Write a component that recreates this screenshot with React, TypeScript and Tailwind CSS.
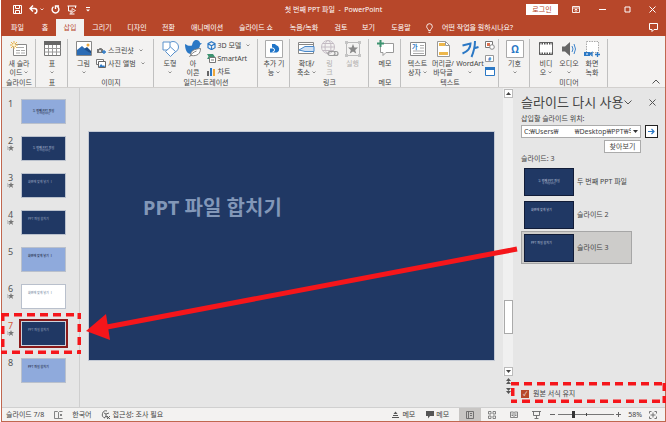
import React from 'react';

const TABS = [
    { label: '파일', width: 'w-[33px]' },
    { label: '홈', width: 'w-[22px]' },
    { label: '삽입', width: 'w-[28px]', active: true },
    { label: '그리기', width: 'w-[36px]' },
    { label: '디자인', width: 'w-[34px]' },
    { label: '전환', width: 'w-[29px]' },
    { label: '애니메이션', width: 'w-[48px]' },
    { label: '슬라이드 쇼', width: 'w-[50px]' },
    { label: '녹음/녹화', width: 'w-[46px]' },
    { label: '검토', width: 'w-[28px]' },
    { label: '보기', width: 'w-[27px]' },
    { label: '도움말', width: 'w-[38px]' },
];

const THUMBS = [
    { fill: 'bg-[#8faadc]', ink: 'text-[#1f2a44]', text: '두 번째 PPT 파일', title: true, star: false },
    { fill: 'bg-[#203864]', ink: 'text-[#9fabc4]', text: '두 번째 PPT 파일', title: true, star: true },
    { fill: 'bg-[#203864]', ink: 'text-[#8f9db9]', text: '화면에 맞게 넣기 Ⅰ', title: false, star: true },
    { fill: 'bg-[#203864]', ink: 'text-[#8f9db9]', text: 'PPT 파일 합치기', title: false, star: true },
    { fill: 'bg-[#8faadc]', ink: 'text-[#1f2a44]', text: '화면에 맞게 넣기 Ⅰ', title: false, star: false },
    { fill: 'bg-white', ink: 'text-[#8090a8]', text: '화면에 맞게 넣기 Ⅰ', title: false, star: true },
    { fill: 'bg-[#203864]', ink: 'text-[#8f9db9]', text: 'PPT 파일 합치기', title: false, star: true, active: true },
    { fill: 'bg-[#8faadc]', ink: 'text-[#1f2a44]', text: 'PPT 파일 합치기', title: false, star: false },
];

const REUSE = [
    { name: '두 번째 PPT 파일', text: '두 번째 PPT 파일', title: true },
    { name: '슬라이드 2', text: '화면에 맞게 넣기', title: false },
    { name: '슬라이드 3', text: 'PPT 파일 합치기', title: false, active: true },
];

interface IconProps {
    w?: number;
    h?: number;
    className?: string;
    children: React.ReactNode;
}

const Icon: React.FC<IconProps> = ({ w = 16, h = 16, className = '', children }) => (
    <svg width={w} height={h} viewBox={`0 0 ${w} ${h}`} fill="none" aria-hidden="true" className={`shrink-0 ${className}`}>
        {children}
    </svg>
);

const Chevron = ({ className = '' }: { className?: string }) => (
    <Icon w={4} h={3} className={`inline-block ${className}`}>
        <path d="M.5.5 2 2 3.5.5" stroke="#777" strokeWidth=".8" />
    </Icon>
);

interface BigButtonProps {
    icon: React.ReactNode;
    lines: string[];
    arrow?: boolean;
    disabled?: boolean;
    width?: string;
}

const BigButton: React.FC<BigButtonProps> = ({ icon, lines, arrow, disabled, width = 'w-[23px]' }) => (
    <button disabled={disabled} className={`flex flex-col items-center shrink-0 whitespace-nowrap leading-[9px] ${width} ${disabled ? 'text-[#b0aeac]' : ''}`}>
        <span className="flex h-[19px] items-center justify-center">{icon}</span>
        <span className="mt-px">{lines[0]}</span>
        <span className="flex h-[9px] items-center gap-[2px]">
            {lines[1]}
            {arrow && <Chevron />}
        </span>
    </button>
);

const SmallButton = ({ icon, label, arrow }: { icon: React.ReactNode; label?: string; arrow?: boolean }) => (
    <button aria-label={label ?? '텍스트 도구'} className="flex h-[13px] items-center gap-[2px] whitespace-nowrap">
        {icon}
        {label}
        {arrow && <Chevron className="ml-[3px]" />}
    </button>
);

const Group = ({ label, width, children }: { label?: string; width: string; children: React.ReactNode }) => (
    <section className={`relative flex flex-col shrink-0 ${width}`}>
        <div className="flex h-[40px] justify-center">{children}</div>
        <span className="text-center leading-[8px] whitespace-nowrap">{label}</span>
        <span className="absolute inset-y-0 right-0 w-px bg-[#c0c0c0]" />
    </section>
);

const Ribbon = () => (
    <div className="relative flex h-[52px] shrink-0 border-b border-[#d2d0ce] bg-[#f3f2f1] pt-[3px]">
        <Group label="슬라이드" width="w-[34px]">
            <BigButton width="w-[32px]" lines={['새 슬라', '이드']} arrow icon={
                <Icon w={18}>
                    <path d="M3.5 3.5h13v11h-13z" fill="#fff" stroke="#888" />
                    <path d="M6 6.5h8M6 9.5h4M11 9.5h4M6 12h4M11 12h4" stroke="#aaa" />
                    <path d="M4 0v8M0 4h8M1 1l6 6M7 1 1 7" stroke="#e8b34a" />
                    <circle cx="4" cy="4" r="1.5" fill="#fff3cf" />
                </Icon>
            } />
        </Group>
        <Group label="표" width="w-[32px]">
            <BigButton lines={['표', '']} arrow icon={
                <Icon w={17} h={15}>
                    <path d="M.5.5h16v14H.5z" fill="#fff" stroke="#777" />
                    <path d="M0 0h17v4H0z" fill="#666" />
                    <path d="M.5 7.5h16M.5 11h16M4.5 4v10M8.5 4v10M12.5 4v10" stroke="#999" />
                </Icon>
            } />
        </Group>
        <Group label="이미지" width="w-[86px]">
            <BigButton lines={['그림', '']} arrow icon={
                <Icon h={15}>
                    <path d="M.5.5h15v14H.5z" fill="#fff" stroke="#888" />
                    <path d="m1 9 5-4 9 8v1H1z" fill="#2b6cb5" />
                    <path d="m8 8 3-2 4 4v3z" fill="#1c4f8c" />
                    <circle cx="12" cy="4" r="1.5" fill="#eda73c" />
                </Icon>
            } />
            <div className="ml-px flex w-[54px] flex-col pt-[5px]">
                <SmallButton label="스크린샷" arrow icon={
                    <Icon w={10} h={9}>
                        <path d="M1 3h2l.5-1h2L6 3h1v4H1z" fill="#777" />
                        <circle cx="4" cy="5" r="1" fill="#fff" />
                        <path d="M8 4v4M6 6h4" stroke="#2b78c5" strokeWidth="1.3" />
                    </Icon>
                } />
                <SmallButton label="사진 앨범" arrow icon={
                    <Icon w={10} h={9}>
                        <path d="M.5.5h7v5h-7z" fill="#fff" stroke="#777" />
                        <path d="M2.5 2.5h7v6h-7z" fill="#fff" stroke="#666" />
                        <path d="m3 8 2-3 2 2 1-1 1 2z" fill="#2b78c5" />
                    </Icon>
                } />
            </div>
        </Group>
        <Group label="일러스트레이션" width="w-[104px]">
            <BigButton lines={['도형', '']} arrow icon={
                <Icon w={17}>
                    <circle cx="11" cy="6" r="5.5" fill="#fff" stroke="#5a92cc" />
                    <path d="M1 1h7v8H1z" fill="#fff" stroke="#5a92cc" />
                    <path d="m8.5 6 5 4.500-5 5-5-5z" fill="#fff" stroke="#5a92cc" />
                </Icon>
            } />
            <BigButton lines={['아', '이콘']} icon={
                <Icon w={17} h={17}>
                    <path d="M0 4c3 2 5 2 7 1.500C7.500 2.500 8.500 0 11.500 0 13.500 0 15 1.500 15 3l2 .5-2 1.500c0 2-1 3-2 4-1 4-4 5-7 5C2 14 0 10 0 4z" fill="#2b78c5" />
                    <path d="M6 15.500C5 11 9 9 15.500 8.500c0 5-3 8-9.500 7zM4.500 17c1.500-3 4-5 7-6" fill="#fff" stroke="#777" strokeWidth=".9" />
                </Icon>
            } />
            <div className="ml-[2px] flex w-[47px] flex-col">
                <SmallButton label="3D 모델" arrow icon={
                    <Icon w={9} h={9}>
                        <path d="m4.500.7 3.500 2v4l-3.500 2-3.500-2v-4zM1 2.700l3.500 2 3.500-2M4.500 4.700v4" stroke="#2b78c5" strokeWidth="1.200" />
                    </Icon>
                } />
                <SmallButton label="SmartArt" icon={
                    <Icon w={9} h={9}>
                        <path d="M0 0h6l2 3-2 2H0l1.500-2.500z" fill="#3d9370" />
                        <path d="M2.500 3.500h6v5h-6z" fill="#fff" stroke="#777" />
                        <path d="M4 6h3" stroke="#777" />
                    </Icon>
                } />
                <SmallButton label="차트" icon={
                    <Icon w={9} h={9}>
                        <path d="M0 4h2v5H0z" fill="#666" />
                        <path d="M3 1h2v8H3z" fill="#2b78c5" />
                        <path d="M6 2h2v7H6z" fill="#eda73c" />
                    </Icon>
                } />
            </div>
        </Group>
        <Group width="w-[32px]">
            <BigButton width="w-[28px]" lines={['추가 기', '능']} arrow icon={
                <Icon w={18} h={18}>
                    <path d="M.5.5h17v17H.5z" fill="#fff" stroke="#aaa" />
                    <path d="M7 4h3l1 1a4 4 0 0 1 1 7.500H5V8h2z" fill="#1f74c8" />
                    <path d="M5 8h2.500a2 2 0 0 1 0 4" stroke="#fff" />
                </Icon>
            } />
        </Group>
        <Group label="링크" width="w-[79px]">
            <BigButton lines={['확대/', '축소']} arrow icon={
                <Icon w={17} h={13}>
                    <path d="M.5.5h15v11H.5z" fill="#fff" stroke="#888" />
                    <path d="M.5 2.500h15" stroke="#888" />
                    <path d="M1 8 7 4.500h9v5H7z" fill="#cfe0f3" stroke="#4a88c8" />
                </Icon>
            } />
            <BigButton disabled lines={['링', '크']} icon={
                <Icon w={18} h={17}>
                    <circle cx="7" cy="7" r="6.500" stroke="#c4bcc4" />
                    <ellipse cx="7" cy="7" rx="3" ry="6.500" stroke="#c4bcc4" />
                    <path d="M.5 7h13M1.500 3.500h11M1.500 10.500h11" stroke="#c4bcc4" />
                    <path d="M9 11.500h3a2 2 0 0 1 0 4H9a2 2 0 0 1 0-4zM13 11.500h2a2 2 0 0 1 0 4h-2" stroke="#999" strokeWidth="1.200" />
                </Icon>
            } />
            <BigButton disabled lines={['실행', '']} icon={
                <Icon>
                    <path d="M1.500 1.500h13v13h-13z" stroke="#bbb" />
                    <path d="M0 0h3v3H0zM13 0h3v3h-3zM0 13h3v3H0zM13 13h3v3h-3z" fill="#c4c4c4" />
                    <path d="m8 3 1.400 3.400 3.600.2-2.800 2.300 1 3.600L8 10.500l-3.200 2 1-3.600L3 6.600l3.600-.2z" fill="#888" />
                </Icon>
            } />
        </Group>
        <Group label="메모" width="w-[32px]">
            <BigButton lines={['메모', '']} icon={
                <Icon w={17} h={17}>
                    <path d="M3.500 3.500h13v9H9l-3 3v-3H3.500z" fill="#fff" stroke="#999" />
                    <path d="M3.500 0v7M0 3.500h7" stroke="#3d9370" strokeWidth="2" />
                </Icon>
            } />
        </Group>
        <Group label="텍스트" width="w-[98px]">
            <BigButton width="w-[25px]" lines={['텍스트', '상자']} arrow icon={
                <Icon w={16} h={14}>
                    <path d="M.5.5h15v13H.5z" fill="#fff" stroke="#888" />
                    <path d="M10 3.500h4M10 6h4M3 9h11M3 11.500h11" stroke="#aaa" />
                    <text x="2" y="7" fontSize="6" fontWeight="700" fill="#2b78c5">가</text>
                </Icon>
            } />
            <BigButton width="w-[26px]" lines={['머리글/', '바닥글']} icon={
                <Icon w={13} h={16}>
                    <path d="M.5.5h8l4 4v11H.5z" fill="#fff" stroke="#999" />
                    <path d="M2 3.500h6M2 12.500h9" stroke="#edb74c" strokeWidth="3" />
                    <path d="M8.500.5v4h4" stroke="#999" />
                </Icon>
            } />
            <BigButton width="w-[28px]" lines={['WordArt', '']} arrow icon={
                <Icon w={18} h={18}>
                    <path d="m1.500 5.500 8-2c0 5-3 8-8 10M14 1c0 5-1 10-3.500 16M12.500 8.500l5-1.500" stroke="#2b78c5" strokeWidth="2" />
                </Icon>
            } />
            <div className="ml-px flex flex-col">
                <SmallButton icon={
                    <Icon w={10} h={9}>
                        <path d="M.5.5h7v6h-7z" fill="#fff" stroke="#777" />
                        <path d="M2 2h3v3H2z" fill="#d9704f" />
                        <circle cx="7" cy="6" r="2.300" fill="#fff" stroke="#888" />
                    </Icon>
                } />
                <SmallButton icon={
                    <Icon w={10} h={9}>
                        <path d="M.5 1.500h8v6h-8z" fill="#fff" stroke="#999" />
                        <text x="3" y="7" fontSize="5" fontWeight="700" fill="#2b78c5">#</text>
                    </Icon>
                } />
                <SmallButton icon={
                    <Icon w={10} h={9}>
                        <path d="M.5.5h9v8h-9z" fill="#fff" stroke="#2b78c5" />
                        <path d="M0 0h10v3H0z" fill="#2b78c5" />
                    </Icon>
                } />
            </div>
        </Group>
        <Group width="w-[31px]">
            <BigButton lines={['기호', '']} arrow icon={
                <Icon w={18} h={18}>
                    <path d="M.5.5h17v17H.5z" fill="#fff" stroke="#aaa" />
                    <text x="9" y="13" textAnchor="middle" fontSize="10" fontWeight="700" fill="#2b78c5">Ω</text>
                </Icon>
            } />
        </Group>
        <Group label="미디어" width="w-[78px]">
            <BigButton lines={['비디', '오']} arrow icon={
                <Icon w={14} h={13}>
                    <path d="M.5.5h13v12H.5z" fill="#fff" stroke="#666" />
                    <path d="M0 1.500h14M0 11.500h14" stroke="#555" strokeWidth="2" strokeDasharray="1.500 1" />
                </Icon>
            } />
            <BigButton lines={['오디오', '']} arrow icon={
                <Icon w={16} h={14}>
                    <path d="M1 4.500h3L9 0v14L4 9.500H1z" fill="#666" />
                    <path d="M11 4q2 3 0 6M13 2q3 5 0 10" stroke="#3f85cc" />
                </Icon>
            } />
            <BigButton lines={['화면', '녹화']} icon={
                <Icon w={16} h={16}>
                    <path d="M2.500.5h12v11h-12z" fill="#fff" stroke="#aaa" strokeDasharray="1.500 1" />
                    <path d="M0 11h6v4H0z" fill="#2b78c5" />
                    <path d="M2 13h2" stroke="#fff" />
                    <path d="m6 13 2-1.500v3zM13.500 11v5M11 13.500h5" stroke="#2b78c5" strokeWidth="1.300" />
                </Icon>
            } />
        </Group>
        <button aria-label="리본 축소" className="mt-auto mr-[5px] mb-[3px] ml-auto">
            <Icon w={8} h={5}><path d="m.5 4.500 3.500-3.500 3.500 3.500" stroke="#555" /></Icon>
        </button>
    </div>
);

const TitleBar = () => (
    <header className="shrink-0 bg-[#b7472a] text-white">
        <div className="grid h-[19px] grid-cols-[1fr_auto_1fr] items-center">
            <div className="flex items-center gap-[7px] pl-[12px]">
                <button aria-label="저장">
                    <Icon w={9} h={9}><path d="M.5.5h8v8h-8zM2.500.5v3h4v-3M2.500 8.500v-3h4v3" stroke="#fff" /></Icon>
                </button>
                <button aria-label="실행 취소" className="flex items-center gap-[2px]">
                    <Icon w={9} h={9}><path d="M4 .5 1 3.500l3 3M1 3.500h4.500a2.300 2.300 0 0 1 0 4.800" stroke="#fff" strokeWidth="1.400" /></Icon>
                    <Icon w={4} h={3}><path d="M.5.5 2 2 3.500.5" stroke="#fff" strokeWidth=".8" /></Icon>
                </button>
                <button aria-label="다시 실행">
                    <Icon w={9} h={9}><path d="M2.500 1.800a3.400 3.400 0 1 0 4 0M4.500 4V1h3.500" stroke="#fff" strokeWidth="1.400" /></Icon>
                </button>
                <button aria-label="처음부터 시작">
                    <Icon w={10} h={10}><path d="M.5 1h9M1.500 1v5h3M8.500 1v2M2.500 9h5M4 6v3" stroke="#fff" /><path d="m5 3.500 3.500 2-3.500 2z" stroke="#fff" strokeWidth=".8" /></Icon>
                </button>
                <button aria-label="빠른 실행 도구 모음" className="ml-[2px]">
                    <Icon w={4} h={5}><path d="M0 .5h4" stroke="#fff" /><path d="M0 2.500h4L2 4.500z" fill="#fff" /></Icon>
                </button>
            </div>
            <h1 className="whitespace-pre">첫 번째 PPT 파일  -  PowerPoint</h1>
            <div className="flex items-center justify-end pr-[10px]">
                <button className="mr-[14px] h-[11px] w-[32px] bg-white leading-[11px] text-[#b7472a]">로그인</button>
                <button aria-label="리본 표시 옵션" className="mr-[19px]">
                    <Icon w={8} h={7}><path d="M.5.5h7v6h-7zM.5 2h7M4 6V3M2.500 4.300 4 3l1.500 1.300" stroke="#fff" strokeWidth=".9" /></Icon>
                </button>
                <button aria-label="최소화" className="mr-[18px]">
                    <Icon w={7} h={7}><path d="M0 3.500h7" stroke="#fff" /></Icon>
                </button>
                <button aria-label="최대화" className="mr-[18px]">
                    <Icon w={7} h={7}><path d="M1 1h5v5H1z" stroke="#fff" /></Icon>
                </button>
                <button aria-label="닫기">
                    <Icon w={7} h={7}><path d="m.5.5 6 6M6.500.5l-6 6" stroke="#fff" /></Icon>
                </button>
            </div>
        </div>
        <nav className="flex h-[17px] items-stretch">
            {TABS.map(tab => (
                <button key={tab.label} className={`shrink-0 whitespace-nowrap ${tab.width} ${tab.active ? 'bg-[#f3f2f1] text-[#b7472a]' : ''}`}>
                    {tab.label}
                </button>
            ))}
            <button className="ml-[6px] flex items-center gap-[9px] whitespace-nowrap">
                <Icon w={7} h={10}><path d="M2.500 7.500C2.500 6 .7 5.500.7 3.500a2.800 2.800 0 0 1 5.600 0c0 2-1.800 2.500-1.800 4zM2.500 9.300h2" stroke="#fff" strokeWidth=".9" /></Icon>
                어떤 작업을 원하시나요?
            </button>
            <button aria-label="메모" className="mr-[8px] ml-auto">
                <Icon w={9} h={9}><path d="M.5.5h8v6H5l-2 2v-2H.5z" stroke="#fff" /></Icon>
            </button>
        </nav>
    </header>
);

const DashedBox = ({ className }: { className: string }) => (
    <svg className={`pointer-events-none absolute ${className}`} aria-hidden="true">
        <rect width="100%" height="100%" fill="none" stroke="#f5161b" strokeWidth="7" strokeDasharray="8 5" />
    </svg>
);

const ThumbArt = ({ text, title, className }: { text: string; title: boolean; className: string }) => (
    <span className={`flex flex-col overflow-hidden whitespace-nowrap ${title ? 'items-center justify-center' : 'pt-[6px] pl-[6px]'} ${className}`}>
        <span className="text-[3px] leading-[4px] font-medium">{text}</span>
        {title && <span className="text-[2px] leading-[2px]">새 프레젠테이션</span>}
    </span>
);

const ThumbList = () => (
    <ol className="w-[78px] shrink-0 border-r border-[#cfcfcf] pt-[11px]">
        {THUMBS.map((t, i) => (
            <li key={i} className="relative flex h-[37px] items-start pl-[4px]">
                <span className={`flex w-[9px] flex-col items-center text-[9px] leading-[9px] ${t.active ? 'text-[#d2593a]' : 'text-[#555]'}`}>
                    {i + 1}
                    {t.star && (
                        <Icon w={7} h={6}>
                            <path d="m4 0 .8 2H7L5.300 3.500 6 6 4 4.600 2 6l.7-2.500L1 2h2.200z" fill="#777" />
                            <path d="M0 2h1M0 4h2" stroke="#888" strokeWidth=".7" />
                        </Icon>
                    )}
                </span>
                <button
                    aria-label={`슬라이드 ${i + 1}`}
                    className={`ml-[6px] h-[25px] w-[45px] border text-left ${t.active ? 'border-[#cfd3dc] outline-2 outline-[#8b1a1a]' : 'border-[#b9c0cc]'}`}
                >
                    <ThumbArt text={t.text} title={t.title} className={`h-full w-full ${t.fill} ${t.ink}`} />
                </button>
                {t.active && <DashedBox className="-top-[8px] -left-px h-[41px] w-[80px]" />}
            </li>
        ))}
    </ol>
);

const ScrollBar = () => (
    <div className="flex w-[10px] shrink-0 flex-col items-center bg-[#f0f0f0]">
        <button aria-label="위로" className="mt-px flex h-[9px] w-[9px] items-center justify-center border border-[#bbb] bg-white">
            <Icon w={5} h={3}><path d="M0 3h5L2.500 0z" fill="#444" /></Icon>
        </button>
        <div className="flex-[202]" />
        <div className="h-[34px] w-[9px] border border-[#aaa] bg-white" />
        <div className="flex-[33]" />
        <button aria-label="아래로" className="flex h-[9px] w-[9px] items-center justify-center border border-[#bbb] bg-white">
            <Icon w={5} h={3}><path d="M0 0h5L2.500 3z" fill="#444" /></Icon>
        </button>
        <div className="flex h-[31px] w-full flex-col items-center gap-[2px] bg-[#e6e6e6] pt-[2px]">
            <button aria-label="이전 슬라이드"><Icon w={5} h={7}><path d="M0 3h5L2.500 0zM0 6h5L2.500 3z" fill="#555" /></Icon></button>
            <button aria-label="다음 슬라이드"><Icon w={5} h={7}><path d="M0 1h5L2.500 4zM0 4h5L2.500 7z" fill="#555" /></Icon></button>
        </div>
    </div>
);

const ReusePane = () => (
    <aside className="relative flex w-[152px] shrink-0 flex-col pl-[8px]">
        <div className="flex h-[25px] items-center pt-[3px] pr-[9px]">
            <h2 className="text-[13px] leading-[18px] whitespace-nowrap text-[#444]">슬라이드 다시 사용</h2>
            <button aria-label="창 옵션" className="ml-px">
                <Icon w={8} h={5}><path d="m.5.5 3.500 3.500 3.500-3.500" stroke="#555" /></Icon>
            </button>
            <button aria-label="창 닫기" className="ml-auto">
                <Icon w={7} h={7}><path d="m.5.5 6 6M6.500.5l-6 6" stroke="#555" /></Icon>
            </button>
        </div>
        <label htmlFor="source" className="leading-[12px]">삽입할 슬라이드 위치:</label>
        <div className="flex items-center gap-[4px]">
            <div className="flex h-[13px] w-[120px] items-center border border-[#ababab] bg-white pl-[2px]">
                <input id="source" defaultValue="C:₩Users₩         ₩Desktop₩PPT₩두" className="min-w-0 flex-1 leading-[11px] outline-none" />
                <button aria-label="목록 열기" className="flex w-[9px] justify-center">
                    <Icon w={5} h={3}><path d="M0 0h5L2.500 3z" fill="#333" /></Icon>
                </button>
            </div>
            <button aria-label="이동" className="flex h-[13px] w-[13px] items-center justify-center border border-[#222] bg-white">
                <Icon w={7} h={7}><path d="M0 3.500h6M3.500 1 6 3.500 3.500 6" stroke="#2b78c5" strokeWidth="1.200" /></Icon>
            </button>
        </div>
        <button className="mt-[2px] ml-[83px] h-[13px] w-[37px] border border-[#ababab] bg-white leading-[11px]">찾아보기</button>
        <p className="leading-[12px]">슬라이드: 3</p>
        <ul>
            {REUSE.map(r => (
                <li key={r.name}>
                    <button className={`flex h-[33px] w-[111px] items-center gap-[3px] border pl-[2px] whitespace-nowrap ${r.active ? 'border-[#a6a6a6] bg-[#cdccca]' : 'border-transparent'}`}>
                        <ThumbArt text={r.text} title={r.title} className="h-[28px] w-[50px] border border-[#111c38] bg-[#203864] text-left text-[#a9b4cb]" />
                        {r.name}
                    </button>
                </li>
            ))}
        </ul>
        <label className="mt-auto mb-[8px] flex items-center gap-[4px] leading-[10px]">
            <input
                type="checkbox"
                defaultChecked
                className="grid h-[8px] w-[8px] appearance-none place-items-center bg-[#b7472a] text-[6px] leading-[8px] text-white checked:before:content-['✓']"
            />
            원본 서식 유지
        </label>
        <DashedBox className="bottom-[4px] -left-[2px] h-[21px] w-[155px]" />
    </aside>
);

const StatusBar = () => (
    <footer className="flex h-[14px] shrink-0 items-center border-t border-[#d0d0d0] bg-[#f3f2f1] pl-[4px] whitespace-nowrap">
        <span>슬라이드 7/8</span>
        <button aria-label="맞춤법 검사" className="ml-[10px]">
            <Icon w={9} h={8}><path d="M.5.5h3l1 1v6h-4zM4.500 1.500l1-1h3M4.500 7.500h4M6 3l2 2M8 3 6 5" stroke="#777" strokeWidth=".9" /></Icon>
        </button>
        <button className="ml-[9px]">한국어</button>
        <button className="ml-[9px] flex items-center gap-[3px]">
            <Icon w={9} h={9}><path d="M6 1a3.500 3.500 0 1 0-2 7M3 3l2 1 3-1M5 4v2L3.500 8M5 6l2 2.500M6 6l3 3M9 6 6 9" stroke="#555" strokeWidth=".9" /></Icon>
            접근성: 조사 필요
        </button>
        <div className="ml-auto flex h-full items-center pr-[8px]">
            <button className="mr-[11px] flex items-center gap-[3px]">
                <Icon w={7} h={7}><path d="M0 6.500h7M1 4.500h5" stroke="#555" /><path d="M1.500 3h4l-2-2.500z" fill="#555" /></Icon>
                메모
            </button>
            <button className="mr-[10px] flex items-center gap-[2px]">
                <Icon w={8} h={8}><path d="M0 0h8v5H4L2 7.500V5H0z" fill="#555" /></Icon>
                메모
            </button>
            <button aria-label="기본" className="mr-[7px] flex h-full w-[22px] items-center justify-center bg-[#c8c6c4]">
                <Icon w={8} h={8}><path d="M.5.5h7v7h-7zM2.500.5v7M4 2.500h2M4 4.500h2" stroke="#666" strokeWidth=".9" /></Icon>
            </button>
            <button aria-label="여러 슬라이드" className="mr-[14px]">
                <Icon w={8} h={8}><path d="M.5.5h2.500v2.500H.5zM5 .5h2.500v2.500H5zM.5 5h2.500v2.500H.5zM5 5h2.500v2.500H5z" stroke="#777" strokeWidth=".9" /></Icon>
            </button>
            <button aria-label="읽기용 보기" className="mr-[14px]">
                <Icon w={8} h={8}><path d="M.5 1h3l.5.5.5-.5h3v5.500h-3L4 7l-.5-.5h-3zM4 1.500V7M1.500 3h1.500M1.500 4.500h1.500M5 3h1.500M5 4.500h1.500" stroke="#777" strokeWidth=".9" /></Icon>
            </button>
            <button aria-label="슬라이드 쇼" className="mr-[9px]">
                <Icon w={9} h={8}><path d="M0 .5h9M1.500.5v4h6v-4M4.500 4.500v3M2.500 7.500h4" stroke="#666" strokeWidth=".9" /></Icon>
            </button>
            <button aria-label="축소" className="mr-[3px]"><Icon w={5} h={5}><path d="M0 2.500h5" stroke="#666" /></Icon></button>
            <input
                type="range"
                aria-label="확대/축소"
                min={10}
                max={190}
                defaultValue={58}
                className="h-[8px] w-[56px] appearance-none bg-[linear-gradient(#444,#444),linear-gradient(#777,#777)] bg-[length:1px_3px,100%_1px] bg-center bg-no-repeat [&::-webkit-slider-thumb]:h-[7px] [&::-webkit-slider-thumb]:w-[3px] [&::-webkit-slider-thumb]:appearance-none [&::-webkit-slider-thumb]:bg-[#333]"
            />
            <button aria-label="확대" className="ml-[2px]"><Icon w={5} h={5}><path d="M0 2.500h5M2.500 0v5" stroke="#666" /></Icon></button>
            <span className="ml-[7px]">58%</span>
            <button aria-label="창에 맞춤" className="ml-[7px]">
                <Icon w={8} h={8}><path d="M.5 2.500v-2h2M5.500.5h2v2M7.500 5.500v2h-2M2.500 7.500h-2v-2M4 1.500v5M1.500 4h5" stroke="#666" strokeWidth=".9" /></Icon>
            </button>
        </div>
    </footer>
);

export default function App() {
    return (
        <div className="flex min-h-screen flex-col bg-white pl-px font-['Noto_Sans','Noto_Sans_CJK_KR',sans-serif] text-[7px] leading-[10px] text-[#444] [&_button]:cursor-pointer">
            <TitleBar />
            <div className="flex flex-1 flex-col border border-t-0 border-[#c0674f] bg-[#e6e6e6]">
                <Ribbon />
                <div className="relative flex flex-1">
                    <ThumbList />
                    <main className="min-w-0 flex-1 px-[8px] pt-[43px]">
                        <div className="aspect-[407/230] border border-[#c3c9d4] bg-[#203864] pt-[62px] pl-[54px]">
                            <p className="text-[20px] leading-[28px] font-bold whitespace-nowrap text-[#8297b8]">PPT 파일 합치기</p>
                        </div>
                    </main>
                    <ScrollBar />
                    <ReusePane />
                    {/* callout from the reused slide to its thumbnail */}
                    <svg viewBox="2 88 663 319" preserveAspectRatio="none" className="pointer-events-none absolute inset-0 h-full w-full" aria-hidden="true">
                        <path d="M107 327 517 249" stroke="#f5161b" strokeWidth="5" />
                        <path d="m86 331 20-17 4 26z" fill="#f5161b" />
                    </svg>
                </div>
                <StatusBar />
            </div>
        </div>
    );
}
